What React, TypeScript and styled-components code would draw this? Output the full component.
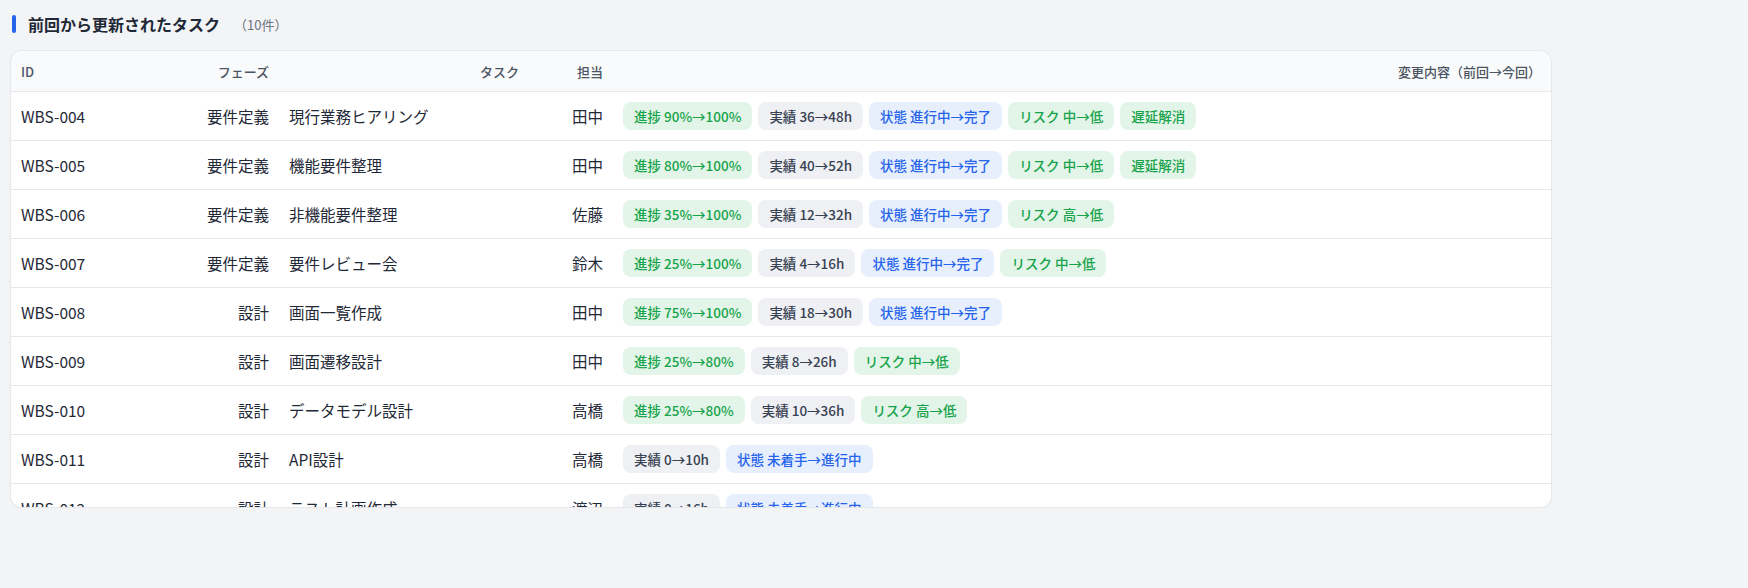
import React from "react";
import styled, { createGlobalStyle } from "styled-components";

const Global = createGlobalStyle`
  body { margin: 0; background: #f3f4f6; font-family: "Noto Sans CJK JP", "Noto Sans", sans-serif; color: #1f2937; }
`;

const Page = styled.div`
  padding: 12px 196px 0 10px;
  width: 1748px;
  box-sizing: border-box;
`;
const TitleRow = styled.div`
  display: flex; align-items: center; height: 24px; margin-bottom: 14px; padding-left: 2px;
`;
const Bar = styled.span`
  width: 4px; height: 18px; border-radius: 2px; background: #2563eb; margin-right: 12px;
`;
const Title = styled.h2`
  margin: 0; font-size: 16px; font-weight: 700; color: #1f2937;
`;
const Count = styled.span`
  margin-left: 14px; font-size: 13px; color: #6b7280;
`;
const arrowUp = `url("data:image/svg+xml;utf8,<svg xmlns='http://www.w3.org/2000/svg' width='14' height='14'><path d='M2 10 L7 4 L12 10 Z' fill='%23888'/></svg>")`;
const arrowDown = `url("data:image/svg+xml;utf8,<svg xmlns='http://www.w3.org/2000/svg' width='14' height='14'><path d='M2 4 L7 10 L12 4 Z' fill='%23888'/></svg>")`;
const Card = styled.div`
  width: 1542px; height: 458px; background: #fff; border: 1px solid #e5e7eb;
  border-radius: 12px; overflow-y: scroll; overflow-x: hidden; box-sizing: border-box;
  box-shadow: 0 1px 2px rgba(0,0,0,0.04);
  &::-webkit-scrollbar { width: 16px; }
  &::-webkit-scrollbar-track { background: #fff; }
  &::-webkit-scrollbar-thumb { background: #8a8a8a; border-radius: 8px; border: 3px solid #fff; }
  &::-webkit-scrollbar-button:single-button { height: 16px; display: block; background-repeat: no-repeat; background-position: center; }
  &::-webkit-scrollbar-button:single-button:vertical:decrement { background-image: ${arrowUp}; }
  &::-webkit-scrollbar-button:single-button:vertical:increment { background-image: ${arrowDown}; }
`;
const Table = styled.table`
  width: 100%; border-collapse: collapse; table-layout: fixed;
`;
const Th = styled.th<{ $align?: string; $w?: number }>`
  ${p => p.$w ? `width: ${p.$w}px;` : ""}
  height: 40px; background: #f9fafb; border-bottom: 1px solid #e5e7eb;
  font-size: 13px; font-weight: 500; color: #4b5563; padding: 0 10px;
  text-align: ${p => p.$align || "left"};
`;
const Td = styled.td<{ $align?: string }>`
  height: 48px; border-bottom: 1px solid #e5e7eb; padding: 0 10px;
  font-size: 15.5px; color: #1f2937; text-align: ${p => p.$align || "left"};
  white-space: nowrap;
`;
const Badges = styled.div`
  display: flex; gap: 6px;
`;
const tones: Record<string, [string, string]> = {
  g: ["#e3f5e9", "#16a34a"],
  n: ["#eef0f4", "#374151"],
  b: ["#e7effd", "#2563eb"],
};
const Badge = styled.span<{ $t: string }>`
  display: inline-flex; align-items: center; height: 28px; padding: 0 11px;
  border-radius: 8px; font-size: 13.5px; font-weight: 500;
  background: ${p => tones[p.$t][0]}; color: ${p => tones[p.$t][1]};
`;

const rows: [string, string, string, string, [string, string][]][] = [
  ["WBS-004", "要件定義", "現行業務ヒアリング", "田中", [["g", "進捗 90%→100%"], ["n", "実績 36→48h"], ["b", "状態 進行中→完了"], ["g", "リスク 中→低"], ["g", "遅延解消"]]],
  ["WBS-005", "要件定義", "機能要件整理", "田中", [["g", "進捗 80%→100%"], ["n", "実績 40→52h"], ["b", "状態 進行中→完了"], ["g", "リスク 中→低"], ["g", "遅延解消"]]],
  ["WBS-006", "要件定義", "非機能要件整理", "佐藤", [["g", "進捗 35%→100%"], ["n", "実績 12→32h"], ["b", "状態 進行中→完了"], ["g", "リスク 高→低"]]],
  ["WBS-007", "要件定義", "要件レビュー会", "鈴木", [["g", "進捗 25%→100%"], ["n", "実績 4→16h"], ["b", "状態 進行中→完了"], ["g", "リスク 中→低"]]],
  ["WBS-008", "設計", "画面一覧作成", "田中", [["g", "進捗 75%→100%"], ["n", "実績 18→30h"], ["b", "状態 進行中→完了"]]],
  ["WBS-009", "設計", "画面遷移設計", "田中", [["g", "進捗 25%→80%"], ["n", "実績 8→26h"], ["g", "リスク 中→低"]]],
  ["WBS-010", "設計", "データモデル設計", "高橋", [["g", "進捗 25%→80%"], ["n", "実績 10→36h"], ["g", "リスク 高→低"]]],
  ["WBS-011", "設計", "API設計", "高橋", [["n", "実績 0→10h"], ["b", "状態 未着手→進行中"]]],
  ["WBS-012", "設計", "テスト計画作成", "渡辺", [["n", "実績 0→16h"], ["b", "状態 未着手→進行中"]]],
  ["WBS-013", "設計", "移行計画作成", "佐藤", [["n", "実績 0→8h"], ["b", "状態 未着手→進行中"]]],
];

export default function App() {
  return (
    <Page>
      <Global />
      <TitleRow>
        <Bar />
        <Title>前回から更新されたタスク</Title>
        <Count>（10件）</Count>
      </TitleRow>
      <Card>
        <Table>
          <thead>
            <tr>
              <Th $w={150}>ID</Th>
              <Th $w={78} $align="right">フェーズ</Th>
              <Th $w={230} $align="right">タスク</Th>
              <Th $w={64} $align="right">担当</Th>
              <Th $align="right">変更内容（前回→今回）</Th>
            </tr>
          </thead>
          <tbody>
            {rows.map(r => (
              <tr key={r[0]}>
                <Td>{r[0]}</Td>
                <Td $align="right">{r[1]}</Td>
                <Td>{r[2]}</Td>
                <Td $align="right">{r[3]}</Td>
                <Td>
                  <Badges>
                    {r[4].map(([t, s]) => <Badge key={s} $t={t}>{s}</Badge>)}
                  </Badges>
                </Td>
              </tr>
            ))}
          </tbody>
        </Table>
      </Card>
    </Page>
  );
}
